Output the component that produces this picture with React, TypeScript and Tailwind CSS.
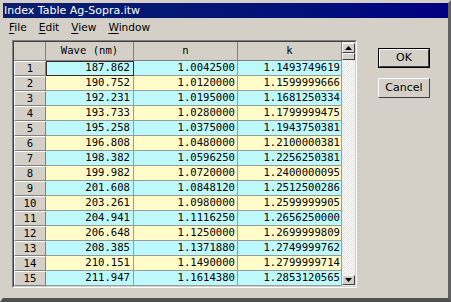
import React from 'react'

const rows: [string, string, string][] = [
  ['187.862', '1.0042500', '1.1493749619'],
  ['190.752', '1.0120000', '1.1599999666'],
  ['192.231', '1.0195000', '1.1681250334'],
  ['193.733', '1.0280000', '1.1799999475'],
  ['195.258', '1.0375000', '1.1943750381'],
  ['196.808', '1.0480000', '1.2100000381'],
  ['198.382', '1.0596250', '1.2256250381'],
  ['199.982', '1.0720000', '1.2400000095'],
  ['201.608', '1.0848120', '1.2512500286'],
  ['203.261', '1.0980000', '1.2599999905'],
  ['204.941', '1.1116250', '1.2656250000'],
  ['206.648', '1.1250000', '1.2699999809'],
  ['208.385', '1.1371880', '1.2749999762'],
  ['210.151', '1.1490000', '1.2799999714'],
  ['211.947', '1.1614380', '1.2853120565'],
]

const sans = "font-['DejaVu_Sans',sans-serif]"
const mono = "font-['DejaVu_Sans_Mono',monospace]"

function MenuItem({ label }: { label: string }) {
  return (
    <span className="px-[6px]">
      <span className="underline underline-offset-2">{label[0]}</span>
      {label.slice(1)}
    </span>
  )
}

function Arrow({ up }: { up?: boolean }) {
  return (
    <div className="flex h-[10px] w-[13px] items-center justify-center border-t border-l border-t-white border-l-white border-r border-b border-r-[#404040] border-b-[#404040] bg-[#d4d0c8]">
      <svg width="7" height="4" viewBox="0 0 7 4">
        {up ? <path d="M3.5 0 L7 4 L0 4 Z" fill="#000" /> : <path d="M0 0 L7 0 L3.5 4 Z" fill="#000" />}
      </svg>
    </div>
  )
}

function Button({ label, isDefault }: { label: string; isDefault?: boolean }) {
  return (
    <div className={`h-[20px] w-[52px] ${isDefault ? 'border border-black' : ''}`}>
      <div className="flex h-full w-full items-center justify-center border-t border-l border-t-white border-l-white border-r border-b border-r-[#404040] border-b-[#404040] bg-[#d4d0c8] text-[11px] text-black">
        {label}
      </div>
    </div>
  )
}

export default function App() {
  return (
    <div className={`flex h-[302px] w-[451px] flex-col border-t-[3px] border-l-[3px] border-r-[3px] border-b-[4px] border-t-[#d4d0c8] border-l-[#d4d0c8] border-r-[#606060] border-b-[#505050] bg-[#d4d0c8] ${sans}`}>
      {/* Title bar */}
      <div className="flex h-[15px] items-center bg-gradient-to-r from-[#0a1f6e] to-[#000080] pl-[1px] text-[11px] leading-none text-white">
        Index Table Ag-Sopra.itw
      </div>

      {/* Menu bar */}
      <div className="flex h-[19px] items-center text-[10.6px] text-black">
        <MenuItem label="File" />
        <MenuItem label="Edit" />
        <MenuItem label="View" />
        <MenuItem label="Window" />
      </div>

      <div className="flex pt-[3px] pl-[9px]">
        {/* Table */}
        <div className="border-t border-l border-t-[#808080] border-l-[#808080] border-r border-b border-r-white border-b-white">
          <div className="flex border-t border-l border-t-[#404040] border-l-[#404040] border-r border-b border-r-[#d4d0c8] border-b-[#d4d0c8]">
            <div className={`flex flex-col ${mono} text-[10.6px] text-black`}>
              {/* Header */}
              <div className="flex h-[19px]">
                <div className="w-[32px] border-r border-b border-r-[#808080] border-b-[#808080] bg-[#d4d0c8]" />
                <div className="flex w-[88px] items-center justify-center border-r border-b border-r-[#808080] border-b-[#808080] bg-[#d4d0c8]">Wave (nm)</div>
                <div className="flex w-[104px] items-center justify-center border-r border-b border-r-[#808080] border-b-[#808080] bg-[#d4d0c8]">n</div>
                <div className="flex w-[104px] items-center justify-center border-r border-b border-r-[#808080] border-b-[#808080] bg-[#d4d0c8]">k</div>
              </div>
              {rows.map((r, i) => {
                const bg = i % 2 === 0 ? 'bg-[#bdf9fb]' : 'bg-[#fffcc9]'
                return (
                  <div key={i} className="flex h-[15px]">
                    <div className="flex w-[32px] items-center justify-center border-t border-l border-t-white border-l-white border-r border-b border-r-[#808080] border-b-[#808080] bg-[#d4d0c8]">
                      {i + 1}
                    </div>
                    <div className={`flex w-[88px] items-center justify-end border-b border-r border-b-[#9a9a9a] border-r-[#9a9a9a] pr-[3px] ${bg} ${i === 0 ? 'outline outline-1 -outline-offset-1 outline-[#3a2a2a]' : ''}`}>
                      {r[0]}
                    </div>
                    <div className={`flex w-[104px] items-center justify-end border-b border-r border-b-[#9a9a9a] border-r-[#9a9a9a] pr-[2px] ${bg}`}>
                      {r[1]}
                    </div>
                    <div className={`flex w-[104px] items-center justify-end border-b border-r border-b-[#9a9a9a] border-r-[#9a9a9a] pr-[1px] ${bg}`}>
                      {r[2]}
                    </div>
                  </div>
                )
              })}
            </div>
            {/* Scrollbar */}
            <div className="flex w-[13px] flex-col justify-between bg-[repeating-conic-gradient(#ffffff_0_25%,#e4e2de_0_50%)] bg-[length:2px_2px] pt-[1px] pb-[1px]">
              <div className="flex flex-col">
                <Arrow up />
                <div className="h-[7px] w-[13px] border-t border-l border-t-white border-l-white border-r border-b border-r-[#404040] border-b-[#404040] bg-[#d4d0c8]" />
              </div>
              <Arrow />
            </div>
          </div>
        </div>

        {/* Buttons */}
        <div className="ml-[21px] flex flex-col gap-[10px] pt-[8px]">
          <Button label="OK" isDefault />
          <Button label="Cancel" />
        </div>
      </div>
    </div>
  )
}
